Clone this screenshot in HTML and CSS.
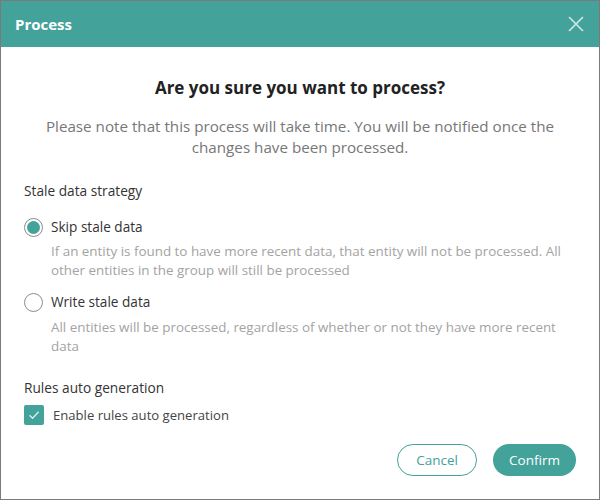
FILE: index.html
```html
<!DOCTYPE html>
<html>
<head>
<meta charset="utf-8">
<link rel="stylesheet" href="styles.css">
</head>
<body>
<div class="dialog">
  <div class="header">
    <span class="title">Process</span>
    <svg class="close" width="16" height="16" viewBox="0 0 16 16"><path d="M1 1 L15 15 M15 1 L1 15" stroke="#cfe9e6" stroke-width="1.6" fill="none"/></svg>
  </div>
  <div class="content">
    <h2 class="heading">Are you sure you want to process?</h2>
    <p class="note">Please note that this process will take time. You will be notified once the changes have been processed.</p>
    <div class="section-label">Stale data strategy</div>
    <div class="option">
      <div class="option-row"><span class="radio checked"></span><span class="option-label">Skip stale data</span></div>
      <div class="option-desc">If an entity is found to have more recent data, that entity will not be processed. All other entities in the group will still be processed</div>
    </div>
    <div class="option">
      <div class="option-row"><span class="radio"></span><span class="option-label">Write stale data</span></div>
      <div class="option-desc">All entities will be processed, regardless of whether or not they have more recent data</div>
    </div>
    <div class="section-label rules">Rules auto generation</div>
    <div class="check-row">
      <span class="checkbox"><svg width="20" height="20" viewBox="0 0 20 20"><path d="M5.5 10.2 L8.6 13.2 L14.6 6.8" stroke="#d8efec" stroke-width="1.3" fill="none"/></svg></span>
      <span class="check-label">Enable rules auto generation</span>
    </div>
    <div class="actions">
      <button class="btn btn-cancel">Cancel</button>
      <button class="btn btn-confirm">Confirm</button>
    </div>
  </div>
</div>
</body>
</html>
```
FILE: styles.css
```css
* { box-sizing: border-box; }
body {
  margin: 0;
  font-family: "Open Sans", "Noto Sans", sans-serif;
  background: #fff;
}
.dialog {
  width: 600px;
  height: 500px;
  border: 1px solid #7a7a7a;
  display: flex;
  flex-direction: column;
}
.header {
  height: 46px;
  background: #43a29a;
  display: flex;
  align-items: center;
  justify-content: space-between;
  padding: 0 15px 0 14px;
}
.title {
  color: #fff;
  font-weight: 700;
  font-size: 15px;
}
.content {
  padding: 0 23px;
  flex: 1;
  display: flex;
  flex-direction: column;
}
.heading {
  margin: 28px 0 0;
  text-align: center;
  font-size: 17px;
  font-weight: 700;
  color: #222;
  line-height: 26px;
}
.note {
  margin: 15px 0 0;
  text-align: center;
  font-size: 15.2px;
  color: #777;
  line-height: 21px;
}
.section-label {
  margin-top: 23px;
  font-size: 13.7px;
  color: #333;
  line-height: 20px;
}
.option { margin-top: 16px; }
.option + .option { margin-top: 12px; }
.option-row {
  display: flex;
  align-items: center;
  gap: 8px;
}
.radio {
  width: 19px;
  height: 19px;
  border: 1px solid #8a8a8a;
  border-radius: 50%;
  display: inline-flex;
  align-items: center;
  justify-content: center;
  flex: none;
}
.radio.checked::after {
  content: "";
  width: 13px;
  height: 13px;
  border-radius: 50%;
  background: #43a29a;
}
.option-label {
  font-size: 13.6px;
  color: #333;
  line-height: 20px;
}
.option-desc {
  margin: 5px 0 0 27px;
  font-size: 13.4px;
  color: #a3a3a3;
  line-height: 19px;
}
.option + .option .option-desc { margin-top: 6px; }
.rules { margin-top: 22px; }
.check-row {
  display: flex;
  align-items: center;
  gap: 9px;
  margin-top: 7px;
}
.checkbox {
  width: 20px;
  height: 20px;
  background: #43a29a;
  border-radius: 2px;
  flex: none;
  display: flex;
}
.check-label {
  font-size: 13.1px;
  color: #444;
  line-height: 20px;
}
.actions {
  display: flex;
  justify-content: flex-end;
  gap: 16px;
  margin-top: 19px;
}
.btn {
  height: 32px;
  border-radius: 16px;
  font-family: inherit;
  font-size: 13.5px;
  padding: 0;
}
.btn-cancel {
  width: 80px;
  background: #fff;
  border: 1px solid #43a29a;
  color: #43a29a;
}
.btn-confirm {
  width: 83px;
  background: #43a29a;
  border: none;
  color: #fff;
}
```
